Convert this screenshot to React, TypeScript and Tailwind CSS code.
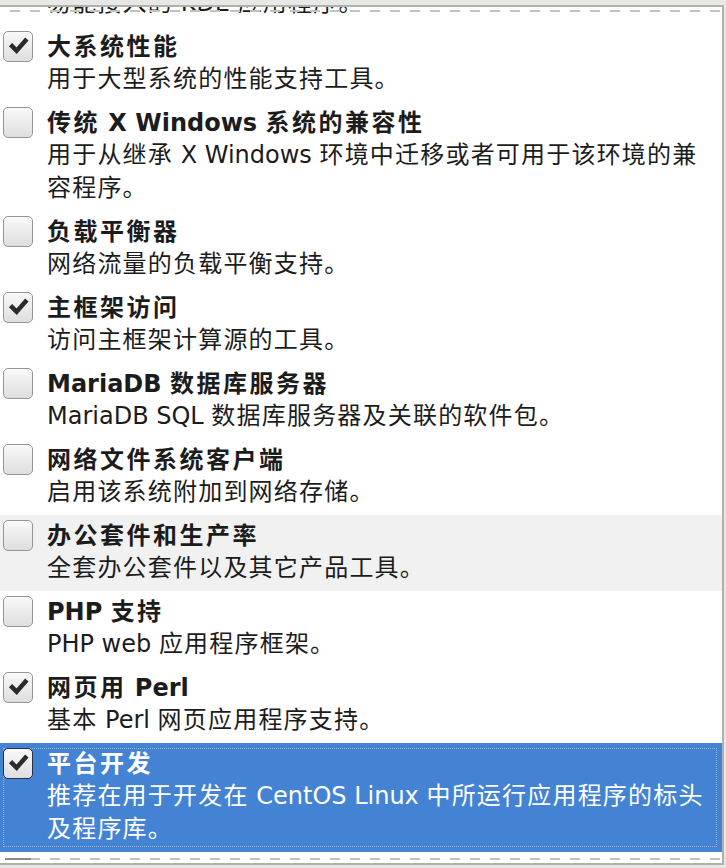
import React from "react";

type Item = {
  title: string;
  desc: string[];
  checked: boolean;
  state?: "hover" | "selected";
};

const items: Item[] = [
  { title: "大系统性能", desc: ["用于大型系统的性能支持工具。"], checked: true },
  {
    title: "传统 X Windows 系统的兼容性",
    desc: ["用于从继承 X Windows 环境中迁移或者可用于该环境的兼", "容程序。"],
    checked: false,
  },
  { title: "负载平衡器", desc: ["网络流量的负载平衡支持。"], checked: false },
  { title: "主框架访问", desc: ["访问主框架计算源的工具。"], checked: true },
  { title: "MariaDB 数据库服务器", desc: ["MariaDB SQL 数据库服务器及关联的软件包。"], checked: false },
  { title: "网络文件系统客户端", desc: ["启用该系统附加到网络存储。"], checked: false },
  { title: "办公套件和生产率", desc: ["全套办公套件以及其它产品工具。"], checked: false, state: "hover" },
  { title: "PHP 支持", desc: ["PHP web 应用程序框架。"], checked: false },
  { title: "网页用 Perl", desc: ["基本 Perl 网页应用程序支持。"], checked: true },
  {
    title: "平台开发",
    desc: ["推荐在用于开发在 CentOS Linux 中所运行应用程序的标头", "及程序库。"],
    checked: true,
    state: "selected",
  },
];

const CJK = /([\u3000-\u9fff\uff00-\uffef]+)/;

function Mixed({ text, title }: { text: string; title?: boolean }) {
  const parts = text.split(CJK).filter((p) => p.length > 0);
  return (
    <>
      {parts.map((p, i) =>
        CJK.test(p) ? (
          <span key={i} className={title ? "tracking-[2.5px]" : "tracking-[1.2px]"}>
            {p}
          </span>
        ) : (
          <span key={i}>{p}</span>
        )
      )}
    </>
  );
}

function CheckBox({ checked, selected }: { checked: boolean; selected?: boolean }) {
  return (
    <div
      className={
        "w-[30px] h-[31px] shrink-0 rounded-[5px] border bg-gradient-to-b from-[#f9f9f9] to-[#dedede] flex items-center justify-center " +
        (selected ? "border-[#26344a]" : "border-[#959595]")
      }
    >
      {checked && (
        <svg width="30" height="31" viewBox="0 0 30 31">
          <path
            d="M7 13.5 L13.5 20 L24.5 7.5"
            fill="none"
            stroke="#2a2a2a"
            strokeWidth="4.8"
            strokeLinecap="butt"
            strokeLinejoin="miter"
          />
        </svg>
      )}
    </div>
  );
}

function Row({ item }: { item: Item }) {
  const selected = item.state === "selected";
  const hover = item.state === "hover";
  return (
    <div
      className={
        "relative flex pl-[3px] pt-[5px] pb-[6px] " +
        (selected ? "bg-[#4483d4] text-white" : hover ? "bg-[#f1f1f1] text-[#1c1c1c]" : "bg-white text-[#1c1c1c]")
      }
    >
      {selected && (
        <div className="absolute left-[3px] right-[5px] top-[5px] bottom-[5px] border border-dotted border-[#93b6e6]" />
      )}
      <div className="relative">
        <CheckBox checked={item.checked} selected={selected} />
      </div>
      <div className="relative ml-[14px] flex flex-col">
        <div className="h-[32px] leading-[32px] text-[24px] font-bold whitespace-nowrap">
          <Mixed text={item.title} title />
        </div>
        {item.desc.map((line, i) => (
          <div key={i} className="h-[33px] leading-[33px] text-[24px] whitespace-nowrap">
            <Mixed text={line} />
          </div>
        ))}
      </div>
    </div>
  );
}

export default function App() {
  return (
    <div
      className="w-[726px] h-[868px] bg-[#e8e8e6] overflow-hidden pt-[5px]"
      style={{ fontFamily: '"DejaVu Sans", "Noto Sans CJK SC", sans-serif' }}
    >
      <div className="relative w-[724px] h-[860px] border-t-2 border-r-2 border-b-2 border-[#b1b1ab] bg-white overflow-hidden">
        <div className="flex flex-col">
          <div className="h-[19px] overflow-hidden flex flex-col justify-end pb-[6px] pl-[47px] text-[#1c1c1c]">
            <div className="h-[33px] shrink-0 leading-[33px] text-[24px] whitespace-nowrap">
              <Mixed text="易能接入的 KDE 应用程序。" />
            </div>
          </div>
          {items.map((it, i) => (
            <Row key={i} item={it} />
          ))}
        </div>
        <div className="absolute left-0 right-0 top-[3px] h-[2px] bg-[repeating-linear-gradient(90deg,transparent_0_10px,#c2c2c2_10px_20px)]" />
        <div className="absolute left-0 right-0 bottom-[3px] h-[2px] bg-[repeating-linear-gradient(90deg,transparent_0_10px,#c2c2c2_10px_20px)]" />
        <div className="absolute left-[5px] w-[26px] bottom-[3px] h-[2px] bg-[#8a8a8a]" />
      </div>
    </div>
  );
}
